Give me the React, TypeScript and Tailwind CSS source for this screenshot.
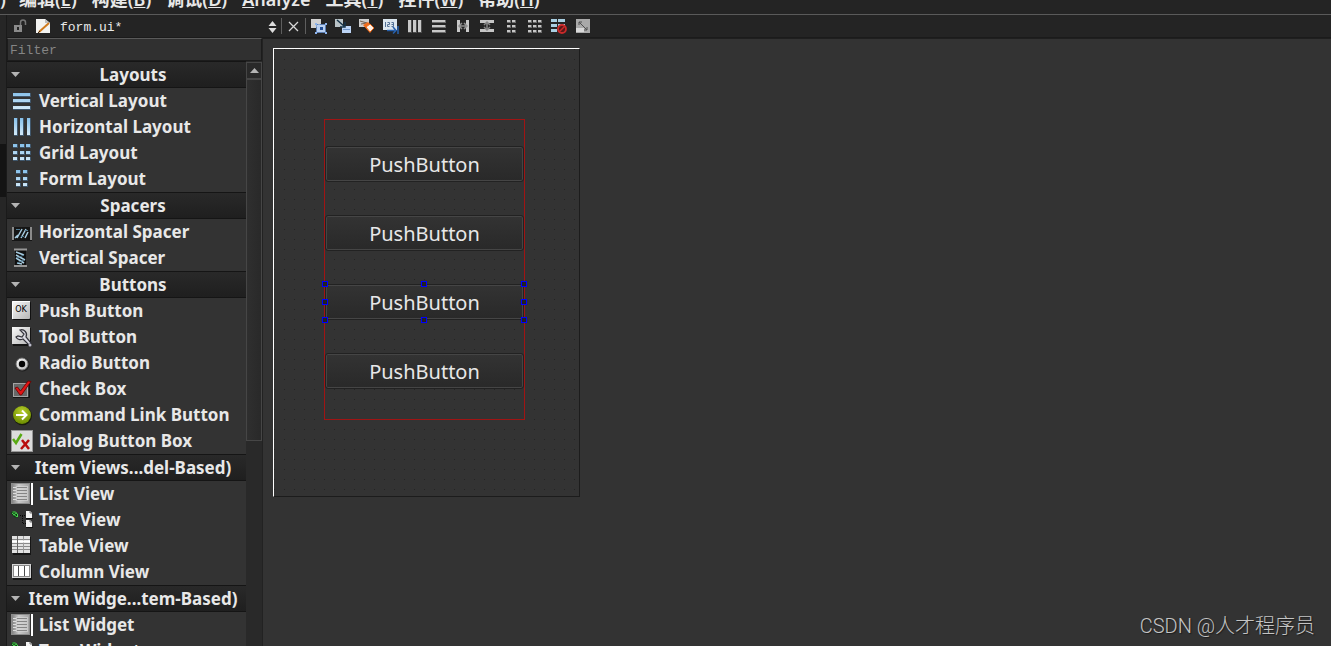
import React, { useState } from "react";

type IconProps = { children: React.ReactNode; size?: number };

function Glyph({ children, size = 22 }: IconProps) {
  return (
    <svg width={size} height={size} viewBox={`0 0 ${size} ${size}`} className="shrink-0" aria-hidden="true">
      {children}
    </svg>
  );
}

type CellsProps = { xs: number[]; ys: number[]; w: number; h: number; fill?: string; edge?: string };

// Small rectangles laid out on a grid, used by all of the layout icons
function Cells({ xs, ys, w, h, fill = "url(#sky)", edge = "#40576c" }: CellsProps) {
  return (
    <>
      {xs.map((x) =>
        ys.map((y) => (
          <g key={`${x}-${y}`}>
            <rect x={x} y={y} width={w + 1} height={h + 1} fill={edge} />
            <rect x={x} y={y} width={w} height={h} fill={fill} />
          </g>
        ))
      )}
    </>
  );
}

function Gradients() {
  return (
    <svg width="0" height="0" className="absolute" aria-hidden="true">
      <defs>
        <linearGradient id="sky" gradientUnits="userSpaceOnUse" x1="0" y1="2" x2="0" y2="20">
          <stop offset="0" stopColor="#86c0ea" />
          <stop offset="1" stopColor="#d8ecf9" />
        </linearGradient>
        <linearGradient id="silver" x1="0" y1="0" x2="1" y2="1">
          <stop offset="0" stopColor="#fafafa" />
          <stop offset="1" stopColor="#b5b5b5" />
        </linearGradient>
        <linearGradient id="page" x1="0" y1="0" x2="1" y2="0">
          <stop offset="0" stopColor="#7d7d7d" />
          <stop offset="0.4" stopColor="#c9c9c9" />
          <stop offset="1" stopColor="#a2a2a2" />
        </linearGradient>
        <radialGradient id="lime" cx="0.5" cy="0.3" r="0.7">
          <stop offset="0" stopColor="#b9cf2c" />
          <stop offset="1" stopColor="#6c8d00" />
        </radialGradient>
      </defs>
    </svg>
  );
}

const listIcon = (
  <Glyph>
    <rect x="0.500" y="0.500" width="18" height="20" fill="url(#page)" stroke="#8c8c8c" />
    <rect x="5" y="3" width="12" height="15" fill="#dadada" opacity="0.6" />
    <path d="M2 4.500h3M2 7.500h3M2 10.500h3M2 13.500h3M2 16.500h3" stroke="#dedede" />
    <path d="M6 4.500h10M6 7.500h10M6 10.500h10M6 13.500h10M6 16.500h10" stroke="#858585" />
    <rect x="20" y="0" width="2" height="22" fill="#fff" />
  </Glyph>
);

const treeIcon = (
  <Glyph>
    <path d="M0 4l2-2 5 3-1 4-3-1z" fill="#0c3a12" />
    <path d="M1 4l5 4M1.500 3q3-1 5 2v3M2 6l4-2" stroke="#4bd84f" fill="none" />
    <path d="M9 6.500h6M11.500 7v8M12 14.500h3" stroke="#080808" strokeDasharray="1 1" />
    <path d="M15 2h4l2 2v5h-6zM15 11h4l2 2v5h-6z" fill="#f4f4f4" />
    <path d="M15 9.500h7M15 18.500h7" stroke="#111" />
    <path d="M19 2v2h2M19 11v2h2" stroke="#777" fill="none" />
  </Glyph>
);

const groups = [
  {
    title: "Layouts",
    items: [
      { label: "Vertical Layout", icon: <Glyph><Cells xs={[2]} ys={[3, 9, 16]} w={17} h={3} /></Glyph> },
      { label: "Horizontal Layout", icon: <Glyph><Cells xs={[3, 9, 16]} ys={[2]} w={3} h={17} /></Glyph> },
      { label: "Grid Layout", icon: <Glyph><Cells xs={[2, 9, 15]} ys={[2, 9, 15]} w={4} h={3} /></Glyph> },
      { label: "Form Layout", icon: <Glyph><Cells xs={[5, 12]} ys={[2, 9, 15]} w={4} h={3} /></Glyph> },
    ],
  },
  {
    title: "Spacers",
    items: [
      {
        label: "Horizontal Spacer",
        icon: (
          <Glyph>
            <rect x="1" y="6" width="20" height="14" fill="#151515" />
            <path d="M2 6v13M20 6v13" stroke="#8b8b8b" strokeWidth="2" />
            <path d="M4 17l3-3M6 17l5-9M10 17l5-9M14 17l3-6" stroke="#a7cde2" strokeWidth="1.500" fill="none" />
            <path d="M5 8.500h4M10 15.500h3M14 9.500h3" stroke="#547d94" />
          </Glyph>
        ),
      },
      {
        label: "Vertical Spacer",
        icon: (
          <Glyph>
            <rect x="4" y="3" width="11" height="17" fill="#111" />
            <path d="M3 2.500h13M3 19h13" stroke="#979797" strokeWidth="2" />
            <path d="M5 5l8 3M5 8l9 5M5 11l8 5M6 16l5 1" stroke="#a7cde2" strokeWidth="1.500" />
            <path d="M13 8l-7 3M13 13l-7 3" stroke="#547d94" />
          </Glyph>
        ),
      },
    ],
  },
  {
    title: "Buttons",
    items: [
      {
        label: "Push Button",
        icon: (
          <Glyph>
            <rect x="2" y="2" width="18" height="18" rx="1" fill="#111" />
            <rect x="1" y="1" width="18" height="18" rx="1" fill="url(#silver)" />
            <path d="M1.500 19V1.500H19" stroke="#fff" fill="none" />
            <text x="10" y="12" textAnchor="middle" className="font-['DejaVu_Sans',sans-serif] text-[8px] font-normal">OK</text>
          </Glyph>
        ),
      },
      {
        label: "Tool Button",
        icon: (
          <Glyph>
            <rect x="2" y="2" width="18" height="18" fill="#151515" />
            <rect x="1" y="1" width="18" height="17" fill="url(#silver)" />
            <path d="M9 4a5 5 0 0 1 6 7l5 6-2 2-6-6a5 5 0 0 1-7-2l2-1 4 1 2-3z" fill="#d9d9e1" stroke="#33333b" strokeWidth="1.200" />
            <circle cx="19" cy="19" r="1.500" fill="#bdbdcb" />
          </Glyph>
        ),
      },
      {
        label: "Radio Button",
        icon: (
          <Glyph>
            <circle cx="11.500" cy="12.500" r="7" fill="#1e1e1e" />
            <circle cx="11" cy="12" r="6" fill="url(#silver)" stroke="#777" />
            <circle cx="11" cy="12" r="3.200" fill="#050505" />
          </Glyph>
        ),
      },
      {
        label: "Check Box",
        icon: (
          <Glyph>
            <rect x="2.500" y="5.500" width="14" height="13" fill="#686868" stroke="#a3a3a3" />
            <path d="M2 19.500h16.500V6" stroke="#151515" fill="none" />
            <path d="M4 10l2.500-1 3 4L17 3l3 .5L10.500 17H9z" fill="#e01515" stroke="#650000" strokeWidth="0.800" />
          </Glyph>
        ),
      },
      {
        label: "Command Link Button",
        icon: (
          <Glyph>
            <circle cx="11.500" cy="11.800" r="9.500" fill="#1a1d0d" />
            <circle cx="11" cy="11" r="9" fill="url(#lime)" />
            <path d="M5 11h10M11 6.500l4.500 4.500-4.500 4.500" stroke="#fff" strokeWidth="2" fill="none" />
          </Glyph>
        ),
      },
      {
        label: "Dialog Button Box",
        icon: (
          <Glyph>
            <rect x="0.500" y="0.500" width="21" height="21" fill="#dcdcdc" stroke="#989898" />
            <path d="M2 9l3 4 5.500-9" stroke="#58a913" strokeWidth="2.500" fill="none" />
            <path d="M11 10l7 9M18 10l-8 9" stroke="#b90d0d" strokeWidth="2.500" />
          </Glyph>
        ),
      },
    ],
  },
  {
    title: "Item Views...del-Based)",
    items: [
      { label: "List View", icon: listIcon },
      { label: "Tree View", icon: treeIcon },
      {
        label: "Table View",
        icon: (
          <Glyph>
            <rect x="2" y="2" width="18" height="18" fill="#161616" />
            <rect x="1" y="1" width="18" height="17" fill="#e2e2e2" />
            <path d="M1 4.500h18M1 8.500h18M1 11.500h18M1 14.500h18" stroke="#8a8a8a" />
            <path d="M12.500 1v17" stroke="#9a9a9a" />
            <path d="M1 6.500h18" stroke="#fff" strokeWidth="2" />
            <path d="M6.500 1v17" stroke="#666" />
          </Glyph>
        ),
      },
      {
        label: "Column View",
        icon: (
          <Glyph>
            <rect x="2" y="4" width="19" height="15" fill="#161616" />
            <rect x="1.500" y="3.500" width="18" height="13" fill="#8a8a8a" stroke="#d5d5d5" />
            <path d="M3 5h4v10H3zM8 5h5v10H8zM14 5h4v10h-4z" fill="#fff" />
            <path d="M7.500 5v10M13.500 5v10" stroke="#4e4e4e" />
          </Glyph>
        ),
      },
    ],
  },
  {
    title: "Item Widge...tem-Based)",
    items: [
      { label: "List Widget", icon: listIcon },
      { label: "Tree Widget", icon: treeIcon },
    ],
  },
];

const tools = [
  {
    label: "Edit Widgets",
    icon: (
      <Glyph size={16}>
        <rect x="0" y="1" width="10" height="9" fill="#d3d3d3" />
        <rect x="5.500" y="6.500" width="9" height="8" fill="#b9d0f2" stroke="#5580c0" strokeDasharray="2 1" />
        <path d="M4 5h2v2H4zM14 5h2v2h-2zM4 14h2v2H4zM14 14h2v2h-2z" fill="#8fb5ec" />
        <rect x="9" y="9" width="3" height="3" fill="#234f96" />
      </Glyph>
    ),
  },
  {
    label: "Edit Signals/Slots",
    icon: (
      <Glyph size={16}>
        <rect x="0" y="1" width="8" height="8" fill="#b9c3c7" />
        <rect x="7" y="8" width="9" height="7" fill="#bcd4f5" />
        <path d="M8 11.500h7" stroke="#7097cb" />
        <path d="M2 2l7 6M10 4v5H5" stroke="#163348" strokeWidth="1.500" fill="none" />
      </Glyph>
    ),
  },
  {
    label: "Edit Buddies",
    icon: (
      <Glyph size={16}>
        <path d="M0 1h10v8H0z" fill="#cecece" />
        <path d="M1 3l7 2M2 6l6-1" stroke="#77604f" />
        <path d="M4 7l5-3 6 6-4 5z" fill="#f06c1c" />
        <path d="M7 9l4-3 4 4-4 4z" fill="#fff2e6" stroke="#f06c1c" />
      </Glyph>
    ),
  },
  {
    label: "Edit Tab Order",
    icon: (
      <Glyph size={16}>
        <rect x="0" y="1" width="14" height="11" fill="#dbe6ef" />
        <path d="M2.500 4v5M4.500 4.500h2v2h-2v2h2M8.500 4.500h2v2h-2M10.500 6v2.500h-2" stroke="#537197" fill="none" />
        <path d="M4 12.500h8M10 9l3 3.500-3 3M15 8v8" stroke="#2761ae" strokeWidth="1.500" fill="none" />
      </Glyph>
    ),
  },
  { label: "Lay Out Horizontally", icon: <Glyph size={16}><Cells xs={[1, 6, 11]} ys={[2]} w={3} h={12} fill="#c8c8c8" edge="#4c4c4c" /></Glyph> },
  { label: "Lay Out Vertically", icon: <Glyph size={16}><Cells xs={[1]} ys={[2, 7, 12]} w={13} h={2} fill="#c8c8c8" edge="#6c6c6c" /></Glyph> },
  {
    label: "Lay Out Horizontally in Splitter",
    icon: (
      <Glyph size={16}>
        <path d="M2 2h3v12H2zM11 2h3v12h-3z" fill="#c8c8c8" />
        <path d="M4 8h8M7 5L4 8l3 3M9 5l3 3-3 3" stroke="#8f8f8f" strokeWidth="1.500" fill="none" />
      </Glyph>
    ),
  },
  {
    label: "Lay Out Vertically in Splitter",
    icon: (
      <Glyph size={16}>
        <path d="M1 2h14v3H1zM1 11h14v3H1z" fill="#c5c5c5" />
        <path d="M8 4v8M5 7l3-3 3 3M5 9l3 3 3-3" stroke="#858585" strokeWidth="1.500" fill="none" />
      </Glyph>
    ),
  },
  { label: "Lay Out in a Form", icon: <Glyph size={16}><Cells xs={[4, 9]} ys={[2, 7, 12]} w={3} h={2} fill="#c6c6c6" edge="#6c6c6c" /></Glyph> },
  { label: "Lay Out in a Grid", icon: <Glyph size={16}><Cells xs={[1, 6, 11]} ys={[2, 7, 12]} w={3} h={2} fill="#c6c6c6" edge="#6c6c6c" /></Glyph> },
  {
    label: "Break Layout",
    icon: (
      <Glyph size={16}>
        <path d="M0 1h6v3H0zM7 1h7v3H7zM0 6h6v3H0zM7 6h7v3H7zM0 11h6v3H0z" fill="#a9cfe2" />
        <circle cx="11" cy="11" r="4" fill="#5a1717" stroke="#c92a2a" strokeWidth="1.800" />
        <path d="M8.500 13.500l5-5" stroke="#c92a2a" strokeWidth="1.500" />
      </Glyph>
    ),
  },
  {
    label: "Adjust Size",
    icon: (
      <Glyph size={16}>
        <rect x="1" y="1" width="14" height="14" fill="#a9a9a9" />
        <rect x="1" y="10" width="8" height="4" fill="#d8d8d8" />
        <path d="M4 4l8 8M4 7V4h3M12 9v3H9" stroke="#505050" fill="none" />
      </Glyph>
    ),
  },
];

const menus = [
  { text: "编辑", key: "E" },
  { text: "构建", key: "B" },
  { text: "调试", key: "D" },
  { text: "工具", key: "T" },
  { text: "控件", key: "W" },
  { text: "帮助", key: "H" },
];

const handles = [
  "-left-[3px] -top-[3px]",
  "left-1/2 -ml-1 -top-[3px]",
  "-right-[3px] -top-[3px]",
  "-left-[3px] top-1/2 -mt-[3px]",
  "-right-[3px] top-1/2 -mt-[3px]",
  "-left-[3px] -bottom-[3px]",
  "left-1/2 -ml-1 -bottom-[3px]",
  "-right-[3px] -bottom-[3px]",
];

function MenuBar() {
  const items = menus.map((menu) => (
    <button key={menu.key} type="button" className="shrink-0">
      {menu.text}(<span className="underline">{menu.key}</span>)
    </button>
  ));

  return (
    <nav className="flex h-[14px] items-end gap-[15px] overflow-hidden bg-[#242424] pb-[3px] text-[18px] leading-6 font-semibold">
      <button type="button" className="w-1 shrink-0">)</button>
      {items.slice(0, 3)}
      <button type="button" className="shrink-0">
        <span className="underline">A</span>nalyze
      </button>
      {items.slice(3)}
    </nav>
  );
}

function Toolbar() {
  return (
    <div className="flex h-[23px] shrink-0 items-center border-b border-[#1b1b1b] bg-[#242424]">
      <button type="button" aria-label="Unlock file" className="ml-1 flex w-6">
        <Glyph size={16}>
          <path d="M3 7h8v7H3z" fill="#8b8b8b" />
          <path d="M9.500 7V4.500a2 2 0 0 1 5 0V7" stroke="#777" strokeWidth="1.500" fill="none" />
          <rect x="6" y="9" width="2" height="3" fill="#252525" />
        </Glyph>
      </button>
      <div className="flex flex-none items-center">
        <Glyph size={16}>
          <path d="M1 1h9l5 4v10H1z" fill="#f3f3f1" />
          <path d="M10 1v4h5" fill="#bfbfbf" />
          <path d="M4 14L14 5" stroke="#cf7a1d" strokeWidth="2" />
          <path d="M3 15l2-2" stroke="#3b2a17" />
        </Glyph>
        <div className="relative ml-[9px] w-[218px]">
          <select
            aria-label="Open document"
            className="block w-full appearance-none bg-transparent pt-[3px] font-['Liberation_Mono',monospace] text-[13px] leading-5 outline-none"
          >
            <option>form.ui*</option>
          </select>
          <svg width="9" height="12" viewBox="0 0 9 12" className="pointer-events-none absolute top-[6px] right-[1px]" aria-hidden="true">
            <path d="M4.500 0L8.500 5h-8zM4.500 12l4-5h-8z" fill="#dcdcdc" />
          </svg>
        </div>
      </div>
      <button
        type="button"
        aria-label="Close document"
        className="mr-[1px] ml-[3px] flex h-4 w-[25px] shrink-0 items-center justify-center border-x border-[#5e5e5e]"
      >
        <svg width="11" height="11" viewBox="0 0 11 11" aria-hidden="true">
          <path d="M1 1l9 9M10 1l-9 9" stroke="#d8d8d8" strokeWidth="1.300" />
        </svg>
      </button>
      {tools.map((tool) => (
        <button key={tool.label} type="button" aria-label={tool.label} className="flex w-6 shrink-0 justify-center">
          {tool.icon}
        </button>
      ))}
    </div>
  );
}

function WidgetBox() {
  const [closed, setClosed] = useState<string[]>([]);

  const toggle = (title: string) =>
    setClosed((prev) => (prev.includes(title) ? prev.filter((t) => t !== title) : [...prev, title]));

  return (
    <aside className="flex w-64 shrink-0 flex-col border-r border-[#222] font-bold">
      <input
        type="text"
        aria-label="Filter"
        placeholder="Filter"
        className="h-[23px] w-full shrink-0 border border-[#1c1c1c] border-t-[#5a5a5a] bg-[#303030] px-[2px] pt-[3px] font-['Liberation_Mono',monospace] text-[13px] font-normal outline-none placeholder:text-[#858585]"
      />
      <div className="flex min-h-0 flex-1">
        <div className="flex-1 overflow-hidden">
          {groups.map((group) => (
            <section key={group.title}>
              <button
                type="button"
                aria-expanded={!closed.includes(group.title)}
                onClick={() => toggle(group.title)}
                className="flex h-[27px] w-full items-center border-y border-[#151515] bg-linear-to-b from-[#292929] to-[#1f1f1f] pl-1 whitespace-nowrap"
              >
                <svg width="9" height="5" viewBox="0 0 9 5" className="shrink-0" aria-hidden="true">
                  <path d="M0 0h9L4.500 5z" fill="#b4b4b4" />
                </svg>
                <span className="flex-1 text-center">{group.title}</span>
              </button>
              {!closed.includes(group.title) && (
                <ul>
                  {group.items.map((item) => (
                    <li key={item.label} className="flex h-[26px] items-center gap-[6px] pl-1 whitespace-nowrap">
                      {item.icon}
                      <span>{item.label}</span>
                    </li>
                  ))}
                </ul>
              )}
            </section>
          ))}
        </div>
        {/* Scrollbar */}
        <div className="flex w-4 shrink-0 flex-col bg-[#292929] pt-[1px]">
          <button type="button" aria-label="Scroll up" className="flex h-[17px] items-center justify-center border border-[#464646]">
            <svg width="9" height="5" viewBox="0 0 9 5" aria-hidden="true">
              <path d="M0 5h9L4.500 0z" fill="#b4b4b4" />
            </svg>
          </button>
          <div className="h-[62%] border border-[#464646] bg-linear-to-r from-[#2f2f2f] to-[#292929]"></div>
        </div>
      </div>
    </aside>
  );
}

function FormCanvas() {
  const [selected, setSelected] = useState(2);

  return (
    <main className="flex-1 overflow-hidden border-t border-[#1f1f1f] pt-[9px] pl-[10px]">
      <div className="relative h-[449px] w-[307px] border border-t-white border-r-[#1c1c1c] border-b-[#1c1c1c] border-l-white bg-[radial-gradient(circle_at_0_0,#242424_1px,transparent_1px)] bg-size-[10px_10px] bg-origin-padding">
        <div className="absolute top-[70px] left-[50px] flex h-[301px] w-[201px] flex-col gap-[33px] border border-[#a01414] pt-[26px]">
          {[0, 1, 2, 3].map((index) => (
            <div key={index} className="relative">
              <button
                type="button"
                onClick={() => setSelected(index)}
                className="block h-9 w-full rounded-[3px] border border-[#222] bg-linear-to-b from-[#333] to-[#292929] pt-[2px] text-[20px] leading-8 inset-ring inset-ring-[#454545]"
              >
                PushButton
              </button>
              {selected === index &&
                handles.map((position) => (
                  <span key={position} className={`absolute size-[6px] border border-[#0000ff] bg-[#222] ${position}`}></span>
                ))}
            </div>
          ))}
        </div>
      </div>
    </main>
  );
}

export default function App() {
  return (
    <div className="relative flex h-screen flex-col overflow-hidden bg-[#333] font-['Noto_Sans','Noto_Sans_CJK_SC',sans-serif] text-[#e8e8e8]">
      <Gradients />
      <MenuBar />
      <div className="flex min-h-0 flex-1 border-t border-[#5a5a5a]">
        <div className="w-[7px] shrink-0 border-r border-[#1a1a1a] bg-[#262626] pt-[129px]">
          <div className="h-[53px] bg-[#141414]"></div>
        </div>
        <div className="flex min-w-0 flex-1 flex-col">
          <Toolbar />
          <div className="flex min-h-0 flex-1 text-[17px] leading-6">
            <WidgetBox />
            <FormCanvas />
          </div>
        </div>
      </div>
      <p className="absolute right-4 bottom-2 font-['Roboto','Noto_Sans_CJK_SC',sans-serif] text-[20px] leading-6 font-light text-[#c4c4c4] [text-shadow:1px_1px_1px_#1c1c1c]">
        CSDN @人才程序员
      </p>
    </div>
  );
}
